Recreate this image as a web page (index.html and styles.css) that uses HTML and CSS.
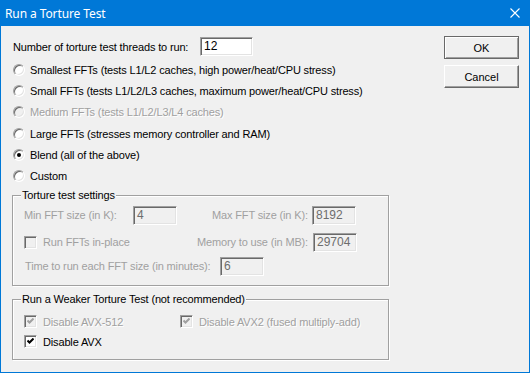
FILE: index.html
```html
<!DOCTYPE html>
<html lang="en">
<head>
  <meta charset="UTF-8" />
  <title>Run a Torture Test</title>
  <link rel="stylesheet" href="styles.css">
</head>
<body>
  <div class="ventana">
    <div class="titulo">
      <span>Run a Torture Test</span>
      <svg class="cerrar" width="10" height="10" viewBox="0 0 10 10">
        <path d="M0.5 0.5 L9.5 9.5 M9.5 0.5 L0.5 9.5" stroke="#fff" stroke-width="1.1" fill="none"/>
      </svg>
    </div>

    <div class="cliente">
      <div class="principal">
        <div class="hilos">
          <span class="lbl-hilos">Number of torture test threads to run:</span>
          <span class="campo ancho">12</span>
        </div>

        <div class="opciones">
          <div class="opcion"><span class="radio"></span>Smallest FFTs (tests L1/L2 caches, high power/heat/CPU stress)</div>
          <div class="opcion"><span class="radio"></span>Small FFTs (tests L1/L2/L3 caches, maximum power/heat/CPU stress)</div>
          <div class="opcion apagado"><span class="radio"></span>Medium FFTs (tests L1/L2/L3/L4 caches)</div>
          <div class="opcion"><span class="radio"></span>Large FFTs (stresses memory controller and RAM)</div>
          <div class="opcion"><span class="radio marcado"></span>Blend (all of the above)</div>
          <div class="opcion"><span class="radio"></span>Custom</div>
        </div>

        <div class="grupo grupo-ajustes">
          <div class="leyenda">Torture test settings</div>
          <div class="fila f1">
            <span class="gris l-min">Min FFT size (in K):</span>
            <span class="campo off">4</span>
            <span class="gris l-max">Max FFT size (in K):</span>
            <span class="campo off">8192</span>
          </div>
          <div class="fila f2">
            <span class="item i-inplace"><span class="check off"></span><span class="gris">Run FFTs in-place</span></span>
            <span class="gris l-mem">Memory to use (in MB):</span>
            <span class="campo off">29704</span>
          </div>
          <div class="fila f3">
            <span class="gris l-tiempo">Time to run each FFT size (in minutes):</span>
            <span class="campo off">6</span>
          </div>
        </div>

        <div class="grupo grupo-debil">
          <div class="leyenda">Run a Weaker Torture Test (not recommended)</div>
          <div class="fila g1">
            <span class="item i-512"><span class="check off"><svg width="7" height="7" viewBox="0 0 7 7"><path d="M0.5 2.5 L2.5 4.5 L6.5 0.5" stroke="#a0a0a0" stroke-width="2" fill="none"/></svg></span><span class="relieve">Disable AVX-512</span></span>
            <span class="item"><span class="check off"><svg width="7" height="7" viewBox="0 0 7 7"><path d="M0.5 2.5 L2.5 4.5 L6.5 0.5" stroke="#a0a0a0" stroke-width="2" fill="none"/></svg></span><span class="relieve">Disable AVX2 (fused multiply-add)</span></span>
          </div>
          <div class="fila g2">
            <span class="item"><span class="check"><svg width="7" height="7" viewBox="0 0 7 7"><path d="M0.5 2.5 L2.5 4.5 L6.5 0.5" stroke="#000" stroke-width="2" fill="none"/></svg></span>Disable AVX</span>
          </div>
        </div>
      </div>

      <div class="botones">
        <button class="boton defecto">OK</button>
        <button class="boton">Cancel</button>
      </div>
    </div>
  </div>
</body>
</html>
```

FILE: styles.css
```css
* {
  box-sizing: border-box;
}

body {
  margin: 0;
  font-family: "Liberation Sans", Arial, sans-serif;
  font-size: 11px;
  letter-spacing: -0.15px;
  color: #000;
  background: #f0f0f0;
}

.ventana {
  width: 530px;
  height: 373px;
  border: 1px solid #0078d7;
  border-top: 0;
  background: #f0f0f0;
  display: flex;
  flex-direction: column;
}

.titulo {
  height: 26px;
  flex: none;
  background: #0078d7;
  color: #fff;
  font-family: "Noto Sans", "Open Sans", sans-serif;
  font-size: 12px;
  letter-spacing: -0.1px;
  display: flex;
  align-items: center;
  justify-content: space-between;
  padding: 0 9px 0 4px;
}

.cliente {
  flex: 1;
  display: flex;
  padding: 11px 0 0 11px;
}

.principal {
  width: 377px;
}

/* hilos */
.hilos {
  height: 19px;
  display: flex;
  align-items: center;
  padding-left: 1px;
}

.lbl-hilos {
  width: 187px;
}

.campo {
  height: 19px;
  width: 44px;
  border: 1px solid;
  border-color: #a0a0a0 #fff #fff #a0a0a0;
  box-shadow: inset 1px 1px 0 #696969, inset -1px -1px 0 #e3e3e3;
  background: #fff;
  padding-left: 3px;
  line-height: 17px;
  font-size: 12px;
  letter-spacing: 0;
}

.campo.ancho {
  width: 53px;
}

.campo.off {
  background: #f0f0f0;
  color: #6d6d6d;
}

/* radios */
.opciones {
  margin-top: 3px;
}

.opcion {
  height: 21.3px;
  display: flex;
  align-items: center;
  padding-left: 1px;
}

.opcion.apagado {
  color: #a0a0a0;
  text-shadow: 1px 1px 0 #fff;
}

.radio {
  width: 12px;
  height: 12px;
  border-radius: 50%;
  margin-right: 5px;
  background: #fff;
  border: 1px solid;
  border-color: #a0a0a0 #fff #fff #a0a0a0;
  box-shadow: inset 1px 1px 0 #696969, inset -1px -1px 0 #e3e3e3;
  display: flex;
  align-items: center;
  justify-content: center;
}

.radio.marcado::after {
  content: "";
  width: 4px;
  height: 4px;
  border-radius: 50%;
  background: #000;
}

.apagado .radio {
  background: #f0f0f0;
}

/* grupos */
.grupo {
  border: 1px solid #a0a0a0;
  box-shadow: 1px 1px 0 #fff, inset 1px 1px 0 #fff;
}

.grupo-ajustes {
  margin-top: 8px;
  padding-bottom: 9px;
}

.grupo-debil {
  margin-top: 13px;
  padding-bottom: 9px;
}

.leyenda {
  display: table;
  margin: -7px 0 0 8px;
  padding: 0 1px;
  line-height: 13px;
  background: #f0f0f0;
}

.fila {
  display: flex;
  align-items: center;
  height: 19px;
  padding-left: 11px;
}

.f1 { margin-top: 4px; }
.f2 { margin-top: 8px; }
.f3 { margin-top: 5px; padding-left: 12px; }

.g1 { margin-top: 8px; height: 16px; }
.g2 { margin-top: 4px; height: 16px; }

.gris {
  color: #a0a0a0;
}

.relieve {
  color: #a0a0a0;
  text-shadow: 1px 1px 0 #fff;
}

.l-min { width: 109px; }
.l-max { width: 100px; margin-left: 35px; }
.i-inplace { width: 173px; }
.l-mem { width: 116px; }
.l-tiempo { width: 195px; }
.i-512 { width: 156px; }

.item {
  display: flex;
  align-items: center;
}

.check {
  width: 13px;
  height: 13px;
  margin-right: 6px;
  background: #fff;
  border: 1px solid;
  border-color: #a0a0a0 #fff #fff #a0a0a0;
  box-shadow: inset 1px 1px 0 #696969, inset -1px -1px 0 #e3e3e3;
  display: flex;
  align-items: center;
  justify-content: center;
}

.check.off {
  background: #f0f0f0;
}

.check svg {
  display: block;
}

/* botones */
.botones {
  margin-left: 55px;
  margin-top: -1px;
  display: flex;
  flex-direction: column;
  gap: 6px;
}

.boton {
  width: 75px;
  height: 23px;
  font-family: "Liberation Sans", Arial, sans-serif;
  font-size: 11px;
  color: #000;
  background: #f0f0f0;
  border: 1px solid;
  border-color: #fff #696969 #696969 #fff;
  box-shadow: inset -1px -1px 0 #a0a0a0;
  padding: 0;
}

.boton.defecto {
  border: 1px solid #696969;
  box-shadow: inset 1px 1px 0 #fff, inset -1px -1px 0 #a0a0a0;
}
```
